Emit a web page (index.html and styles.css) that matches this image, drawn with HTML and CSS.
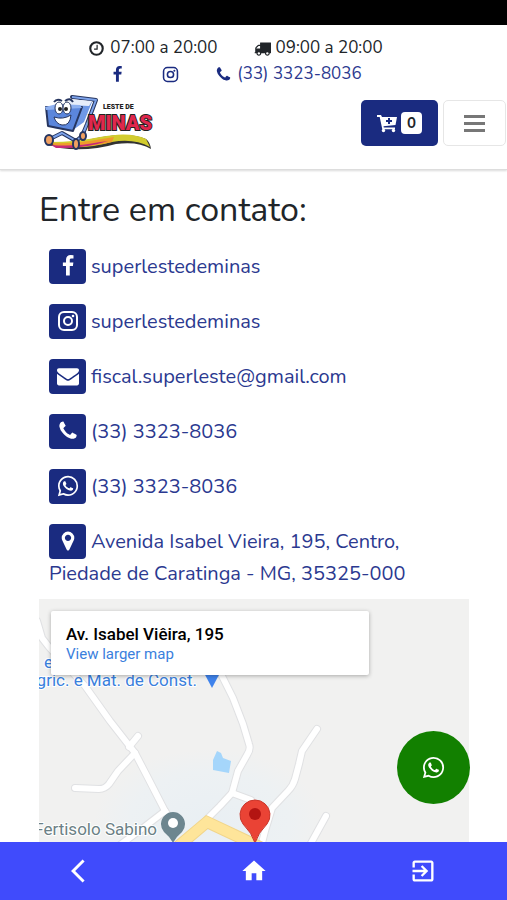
FILE: index.html
```html
<!DOCTYPE html>
<html lang="pt-BR">
<head>
<meta charset="UTF-8">
<meta name="viewport" content="width=device-width, initial-scale=1.0">
<title>Leste de Minas - Contato</title>
<link rel="stylesheet" href="styles.css">
</head>
<body>
<!-- icons -->
<svg class="sprite" aria-hidden="true">
<symbol id="facebook" viewBox="0 0 1792 1792"><path d="M1343 12v264h-157q-86 0-116 36t-30 108v189h293l-39 296h-254v759h-306v-759h-255v-296h255v-218q0-186 104-288.500t277-102.500q147 0 228 12z"/></symbol>
<symbol id="instagram" viewBox="1 1 22 22"><rect x="3" y="3" width="18" height="18" rx="5" fill="none" stroke="currentColor" stroke-width="2"/><circle cx="12" cy="12" r="4" fill="none" stroke="currentColor" stroke-width="2"/><circle cx="17" cy="7" r="1.300"/></symbol>
<symbol id="envelope" viewBox="0 0 1792 1792"><path d="M1792 710v794q0 66-47 113t-113 47h-1472q-66 0-113-47t-47-113v-794q44 49 101 87 362 246 497 345 57 42 92.500 65.500t94.500 48 110 24.500h2q51 0 110-24.500t94.500-48 92.500-65.500q170-123 498-345 57-39 100-87zm0-294q0 79-49 151t-122 123q-376 261-468 325-10 7-42.500 31t-54 38.500-52 32.500-57.500 27-50 9h-2q-23 0-50-9t-57.500-27-52-32.500-54-38.500-42.500-31q-91-64-262-182.500t-205-142.500q-62-42-117-115.500t-55-136.500q0-78 41.500-130t118.500-52h1472q65 0 112.500 47t47.500 113z"/></symbol>
<symbol id="phone" viewBox="0 0 1792 1792"><path d="M1600 1240q0 27-10 70.500t-21 68.500q-21 50-122 106-94 51-186 51-27 0-52.500-3.500t-57.500-12.500-47.500-14.500-55.500-20.500-49-18q-98-35-175-83-128-79-264.500-215.500t-215.500-264.500q-48-77-83-175-3-9-18-49t-20.500-55.500-14.500-47.500-12.500-57.500-3.500-52.500q0-92 51-186 56-101 106-122 25-11 68.500-21t70.500-10q14 0 21 3 18 6 53 76 11 19 30 54t35 63.500 31 53.500q3 4 17.500 25t21.500 35.500 7 28.500q0 20-28.500 50t-62 55-62 53-28.500 46q0 9 5 22.500t8.500 20.500 14 24 11.500 19q76 137 174 235t235 174q2 1 19 11.500t24 14 20.500 8.500 22.500 5q18 0 46-28.500t53-62 55-62 50-28.500q14 0 28.500 7t35.500 21.500 25 17.500q25 15 53.500 31t63.500 35 54 30q70 35 76 53 3 7 3 21z"/></symbol>
<symbol id="marker" viewBox="0 0 1792 1792"><path d="M1152 640q0-106-75-181t-181-75-181 75-75 181 75 181 181 75 181-75 75-181zm256 0q0 109-33 179l-364 774q-16 33-47.500 52t-67.500 19-67.500-19-46.500-52l-365-774q-33-70-33-179 0-212 150-362t362-150 362 150 150 362z"/></symbol>
<symbol id="clock" viewBox="0 0 1792 1792"><circle cx="896" cy="896" r="656" fill="none" stroke="currentColor" stroke-width="224"/><path d="M1024 544v448q0 14-9 23t-23 9h-320q-14 0-23-9t-9-23v-64q0-14 9-23t23-9h224v-352q0-14 9-23t23-9h64q14 0 23 9t9 23z"/></symbol>
<symbol id="truck" viewBox="0 0 1792 1792"><path d="M640 1408q0-52-38-90t-90-38-90 38-38 90 38 90 90 38 90-38 38-90zm-384-512h384v-256h-158q-13 0-22 9l-195 195q-9 9-9 22v30zm1280 512q0-52-38-90t-90-38-90 38-38 90 38 90 90 38 90-38 38-90zm256-1088v1024q0 15-4 26.500t-13.500 18.500-16.500 11.500-23.500 6-22.500 2-25.500 0-22.500-.5q0 106-75 181t-181 75-181-75-75-181h-384q0 106-75 181t-181 75-181-75-75-181h-64q-3 0-22.500.5t-25.500 0-22.500-2-23.500-6-16.500-11.500-13.500-18.500-4-26.500q0-26 19-45t45-19v-320q0-8-.5-35t0-38 2.500-34.500 6.500-37 14-30.500 22.500-30l198-198q19-19 50.500-32t58.500-13h160v-192q0-26 19-45t45-19h1024q26 0 45 19t19 45z"/></symbol>
<symbol id="cart" viewBox="0 0 20 20"><path d="M0 2h4l1 2H20L18.500 12 6.500 13.300l.3 1.200H18v1.700H5.300L2.700 4H0z"/><circle cx="6.500" cy="17.500" r="1.700"/><circle cx="16.500" cy="17.500" r="1.700"/><path d="M11 5h2v2h2v2h-2v2h-2V9H9V7h2z" fill="#1a2b80"/></symbol>
<symbol id="whatsapp" viewBox="-1 -1 26 26"><path d="M17.472 14.382c-.297-.149-1.758-.867-2.030-.967-.273-.099-.471-.148-.67.15-.197.297-.767.966-.94 1.164-.173.199-.347.223-.644.075-.297-.15-1.255-.463-2.390-1.475-.883-.788-1.480-1.761-1.653-2.059-.173-.297-.018-.458.13-.606.134-.133.298-.347.446-.52.149-.174.198-.298.298-.497.099-.198.05-.371-.025-.52-.075-.149-.669-1.612-.916-2.207-.242-.579-.487-.5-.669-.51-.173-.008-.371-.01-.57-.01-.198 0-.52.074-.792.372-.272.297-1.040 1.016-1.040 2.479 0 1.462 1.065 2.875 1.213 3.074.149.198 2.096 3.200 5.077 4.487.709.306 1.262.489 1.694.625.712.227 1.360.195 1.871.118.571-.085 1.758-.719 2.006-1.413.248-.694.248-1.289.173-1.413-.074-.124-.272-.198-.57-.347m-5.421 7.403h-.004a9.870 9.870 0 01-5.031-1.378l-.361-.214-3.741.982.998-3.648-.235-.374a9.860 9.860 0 01-1.510-5.260c.001-5.450 4.436-9.884 9.888-9.884 2.640 0 5.122 1.030 6.988 2.898a9.825 9.825 0 012.893 6.994c-.003 5.450-4.437 9.884-9.885 9.884m8.413-18.297A11.815 11.815 0 0012.050 0C5.495 0 .16 5.335.157 11.892c0 2.096.547 4.142 1.588 5.945L.057 24l6.305-1.654a11.882 11.882 0 005.683 1.448h.005c6.554 0 11.890-5.335 11.893-11.893a11.821 11.821 0 00-3.480-8.413z"/></symbol>
</svg>

<div class="status-bar"></div>

<header>
<div class="top-row hours">
<span class="info"><svg class="icon"><use href="#clock"/></svg>07:00 a 20:00</span>
<span class="info"><svg class="icon"><use href="#truck"/></svg>09:00 a 20:00</span>
</div>
<div class="top-row social">
<a class="info" href="#" aria-label="Facebook"><svg class="icon"><use href="#facebook"/></svg></a>
<a class="info" href="#" aria-label="Instagram"><svg class="icon"><use href="#instagram"/></svg></a>
<a class="info" href="#"><svg class="icon"><use href="#phone"/></svg>(33) 3323-8036</a>
</div>
<div class="navbar">
<a class="brand" href="#" aria-label="Leste de Minas">
<svg class="logo" viewBox="0 0 112 58">
<path d="M6 42Q2 50 10 52Q36 48 60 43Q88 38 104 45Q108 48 109 55Q96 47 74 50Q46 58 18 54Z" fill="#333"/>
<path d="M8 48Q34 48 58 43Q88 37 104 45L108 53Q92 44 70 48Q42 56 14 52Z" fill="#d2cc2e"/>
<path d="M8 49Q34 50 60 45L72 43L70 48Q42 55 14 52Z" fill="#ef9b2b"/>
<path d="M9 51Q34 53 58 48L66 47Q42 55 14 54Z" fill="#c62a78"/>
<path d="M30 3L54 6L45 30L40 42L34 47L20 39L6 46" fill="none" stroke="#26355f" stroke-width="4" stroke-linejoin="round" stroke-linecap="round"/>
<path d="M29 7L50 8L42 28L31 36L12 34Z" fill="#6f98e6"/>
<path d="M28 5L50 7L47 12L26 11Z" fill="#e7edfa"/>
<path d="M4 13L40 13L31 37L6 32Z" fill="#5b86dc" stroke="#26355f" stroke-width="2" stroke-linejoin="round"/>
<path d="M3 13L15 10L38 11L40 14L4 16Z" fill="#8eb0f0"/>
<path d="M30 3L54 6L45 30L40 42L34 47L20 39L6 46" fill="none" stroke="#7da3eb" stroke-width="2" stroke-linejoin="round"/>
<ellipse cx="17" cy="14" rx="4" ry="6" fill="#fff" stroke="#26355f"/>
<ellipse cx="25" cy="14" rx="4" ry="6" fill="#fff" stroke="#26355f"/>
<circle cx="18" cy="15" r="2" fill="#222"/><circle cx="24" cy="15" r="2" fill="#222"/>
<path d="M12 8Q15 4 20 7M23 7Q28 3 31 8" fill="none" stroke="#26355f" stroke-width="2"/>
<path d="M12 23Q21 26 29 21Q28 32 20 31Q14 30 12 23Z" fill="#fff" stroke="#26355f"/>
<g fill="#f0a060" stroke="#26355f" stroke-width="2"><ellipse cx="7" cy="46" rx="4" ry="5"/><ellipse cx="34" cy="50" rx="3" ry="5"/><ellipse cx="41" cy="42" rx="3" ry="4"/></g>
<text class="logo-small" x="61" y="15">LESTE DE</text>
<text class="logo-name" x="46" y="36">MINAS</text>
</svg>
</a>
<div class="nav-buttons">
<button class="cart-button" type="button" aria-label="Carrinho, 0 itens"><svg class="cart-icon"><use href="#cart"/></svg><span class="badge">0</span></button>
<button class="menu-button" type="button" aria-label="Menu"><span class="bar"></span><span class="bar"></span><span class="bar"></span></button>
</div>
</div>
</header>

<main>
<h1>Entre em contato:</h1>
<ul class="contacts">
<li><a href="#"><span class="tile"><svg><use href="#facebook"/></svg></span>superlestedeminas</a></li>
<li><a href="#"><span class="tile"><svg><use href="#instagram"/></svg></span>superlestedeminas</a></li>
<li><a href="#"><span class="tile"><svg><use href="#envelope"/></svg></span>fiscal.superleste@gmail.com</a></li>
<li><a href="#"><span class="tile"><svg><use href="#phone"/></svg></span>(33) 3323-8036</a></li>
<li><a href="#"><span class="tile"><svg><use href="#whatsapp"/></svg></span>(33) 3323-8036</a></li>
<li><a href="#"><span class="tile"><svg><use href="#marker"/></svg></span>Avenida Isabel Vieira, 195, Centro, Piedade de Caratinga - MG, 35325-000</a></li>
</ul>

<div class="map">
<svg class="map-canvas" viewBox="0 0 430 244" preserveAspectRatio="xMidYMin slice">
<defs>
<radialGradient id="town"><stop offset="0" stop-color="#e9eff3"/><stop offset="0.700" stop-color="#edf1f3"/><stop offset="1" stop-color="#f1f1f0"/></radialGradient>
<g id="roads" fill="none" stroke-linecap="round" stroke-linejoin="round">
<path d="M-2 22L3 39L10 48L46 87L71 122L96 154L108 177L126 212L134 224"/>
<path d="M99 137L90 148M96 154L79 172L70 185Q66 190 60 190L36 189"/>
<path d="M183 77L194 99L204 125L210 145Q212 150 208 156L199 172L193 194L181 207L168 220"/>
<path d="M193 194L212 201M126 212L104 229L81 246"/>
<path d="M278 130L263 152L260 165L256 180Q254 187 249 192L233 209L226 232L222 248"/>
<path d="M287 217L271 246"/>
</g>
</defs>
<rect width="430" height="244" fill="#f1f1f0"/>
<ellipse cx="170" cy="225" rx="115" ry="75" fill="url(#town)"/>
<use href="#roads" stroke="#e0e1e3" stroke-width="8"/>
<use href="#roads" stroke="#fff" stroke-width="6"/>
<path d="M136 250L168 223L204 240L225 250" fill="none" stroke="#f1d58a" stroke-width="12"/>
<path d="M136 250L168 223L204 240L225 250" fill="none" stroke="#fee59a" stroke-width="10"/>
<path d="M178 152L182 154L184 159L192 162L190 174L174 171L174 161Z" fill="#a5d6fb"/>
<path d="M164 72L182 72L173 89Z" fill="#3f83ec"/>
<text class="map-label blue" x="5" y="69">e</text>
<text class="map-label blue" x="158" y="87" text-anchor="end">gric. e Mat. de Const.</text>
<text class="map-label grey" x="118" y="236" text-anchor="end">Fertisolo Sabino</text>
<path d="M134 244Q131 238 125 233A12 12 0 1 1 143 233Q137 238 134 244Z" fill="#6d868f"/>
<circle cx="134" cy="224" r="5" fill="#fff"/>
<path d="M216 244Q213 234 204 225A15 15 0 1 1 228 225Q219 234 216 244Z" fill="#ea4335" stroke="#c9352a"/>
<circle cx="216" cy="215" r="6" fill="#b31412"/>
</svg>
<div class="place-card">
<strong>Av. Isabel Viêira, 195</strong>
<a href="#">View larger map</a>
</div>
</div>
</main>

<a class="whatsapp-float" href="#" aria-label="WhatsApp"><svg><use href="#whatsapp"/></svg></a>

<nav class="bottom-nav">
<button type="button" aria-label="Voltar"><svg viewBox="0 0 24 24"><path d="M11.670 3.870L9.900 2.100 0 12l9.900 9.900 1.770-1.770L3.540 12z"/></svg></button>
<button type="button" aria-label="Início"><svg viewBox="0 0 24 24"><path d="M10 20v-6h4v6h5v-8h3L12 3 2 12h3v8z"/></svg></button>
<button type="button" aria-label="Sair"><svg viewBox="0 0 24 24"><path d="M10.090 15.590L11.500 17l5-5-5-5-1.410 1.410L12.670 11H3v2h9.670l-2.580 2.590zM19 3H5c-1.110 0-2 .9-2 2v4h2V5h14v14H5v-4H3v4c0 1.100.89 2 2 2h14c1.100 0 2-.9 2-2V5c0-1.100-.9-2-2-2z"/></svg></button>
</nav>
</body>
</html>
```
FILE: styles.css
```css
* {
box-sizing: border-box;
}
body {
margin: 0;
min-height: 100vh;
display: flex;
flex-direction: column;
font-family: Nunito, Lato, sans-serif;
color: #212529;
background-color: #fff;
}
a {
color: #2b3990;
text-decoration: none;
}
svg {
fill: currentColor;
}
button {
font-family: inherit;
border: none;
padding: 0;
cursor: pointer;
}
.sprite {
position: absolute;
width: 0;
height: 0;
}
.status-bar {
height: 25px;
background-color: #000;
}

/* header */
header {
padding-top: 10px;
border-bottom: 1px solid #ddd;
box-shadow: 0 1px 2px rgba(0, 0, 0, 0.15);
}
.top-row {
display: flex;
justify-content: center;
padding-right: 36px;
font-size: 17px;
line-height: 26px;
}
.hours {
gap: 36px;
}
.social {
gap: 36px;
}
.info {
display: flex;
align-items: center;
gap: 5px;
}
.icon {
width: 17px;
height: 17px;
}
.social .icon {
color: #1a2b80;
}
.navbar {
display: flex;
justify-content: space-between;
align-items: center;
padding: 7px 1px 17px 42px;
}
.logo {
display: block;
width: 112px;
height: 58px;
}
.logo-name {
font-family: Roboto, sans-serif;
font-size: 20px;
font-weight: 900;
fill: #e0274d;
stroke: #222;
stroke-width: 2px;
paint-order: stroke;
}
.logo-small {
font-family: Roboto, sans-serif;
font-size: 7px;
font-weight: 900;
fill: #222;
}
.nav-buttons {
display: flex;
gap: 5px;
}
.cart-button {
display: flex;
align-items: center;
justify-content: center;
gap: 4px;
width: 77px;
height: 46px;
border-radius: 5px;
background-color: #1a2b80;
color: #fff;
}
.cart-icon {
width: 20px;
height: 20px;
}
.badge {
width: 21px;
border-radius: 4px;
background-color: #fff;
color: #212529;
font-size: 15px;
font-weight: bold;
line-height: 22px;
}
.menu-button {
display: flex;
flex-direction: column;
align-items: center;
justify-content: center;
gap: 4px;
width: 63px;
height: 46px;
border: 1px solid #e6e6e6;
border-radius: 5px;
background-color: #fff;
}
.bar {
width: 21px;
height: 3px;
background-color: #777;
}

/* contacts */
main {
flex: 1;
display: flex;
flex-direction: column;
padding: 17px 38px 0 39px;
}
h1 {
margin: 0;
font-size: 34px;
font-weight: normal;
line-height: 46px;
}
.contacts {
margin: 6px 0 0;
padding: 0 10px;
list-style: none;
font-size: 20px;
line-height: 30px;
}
.contacts li {
padding: 10px 0;
}
.tile {
display: inline-flex;
align-items: center;
justify-content: center;
width: 37px;
height: 35px;
margin-right: 5px;
padding-bottom: 1px;
border-radius: 4px;
background-color: #1a2b80;
color: #fff;
vertical-align: -4px;
}
.tile svg {
width: 22px;
height: 22px;
}

/* map */
.map {
flex: 1;
position: relative;
min-height: 240px;
overflow: hidden;
background-color: #f1f1f0;
}
.map-canvas {
position: absolute;
top: 0;
left: 0;
width: 100%;
height: 100%;
}
.map-label {
font-family: Roboto, sans-serif;
font-size: 17px;
stroke: #fff;
stroke-width: 2px;
paint-order: stroke;
}
.blue {
fill: #3a80dd;
}
.grey {
fill: #6b7f85;
}
.place-card {
position: absolute;
top: 12px;
left: 12px;
width: 74%;
padding: 13px 15px 11px;
border-radius: 2px;
background-color: #fff;
box-shadow: 0 1px 4px rgba(0, 0, 0, 0.3);
font-family: Roboto, sans-serif;
}
.place-card strong {
display: block;
color: #000;
font-size: 17px;
font-weight: 500;
line-height: 20px;
}
.place-card a {
display: block;
color: #3a80dd;
font-size: 15px;
line-height: 20px;
}
.whatsapp-float {
position: fixed;
right: 37px;
bottom: 96px;
display: flex;
align-items: center;
justify-content: center;
width: 73px;
height: 73px;
border-radius: 50%;
background-color: #128000;
color: #fff;
}
.whatsapp-float svg {
width: 23px;
height: 23px;
}

/* bottom navigation */
.bottom-nav {
display: flex;
height: 58px;
background-color: #404bfc;
}
.bottom-nav button {
flex: 1;
display: flex;
align-items: center;
justify-content: center;
background: none;
color: #fff;
}
.bottom-nav svg {
width: 28px;
height: 28px;
}
```
